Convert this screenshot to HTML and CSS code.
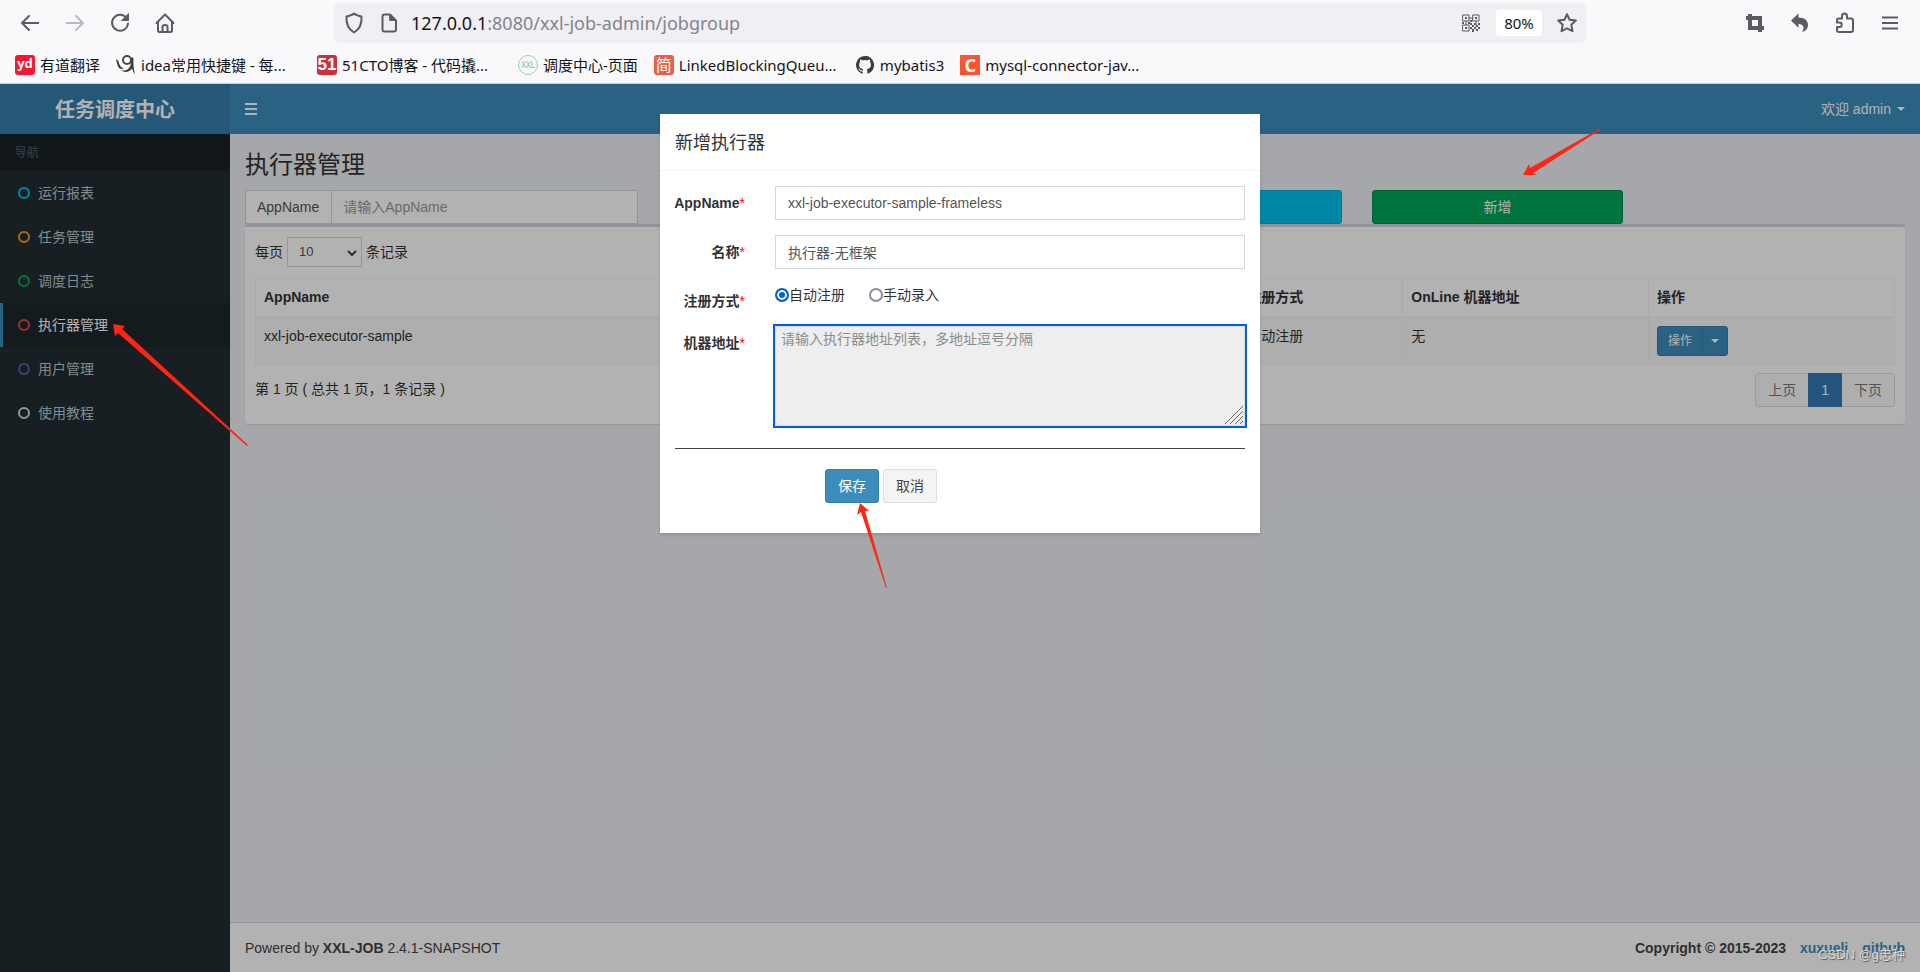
FILE: index.html
```html
<!DOCTYPE html>
<html lang="zh-CN">
<head>
<meta charset="utf-8">
<title>任务调度中心</title>
<link rel="stylesheet" href="styles.css">
</head>
<body>
<div class="chrome">
  <div class="toolbar">
    <div class="nav-buttons">
      <button class="tool" aria-label="后退"><svg width="18" height="18" viewBox="0 0 18 18"><path d="M17.5 9H1.5M8 2 1 9l7 7"/></svg></button>
      <button class="tool faded" aria-label="前进"><svg width="18" height="18" viewBox="0 0 18 18"><path d="M.5 9h16M10 2l7 7-7 7"/></svg></button>
      <button class="tool" aria-label="刷新"><svg width="20" height="20" viewBox="0 0 20 20"><path d="M16.6 5.2A8 8 0 1 0 18 10.5"/><path class="solid" d="M18.5 1v6.5H12z"/></svg></button>
      <button class="tool" aria-label="主页"><svg width="20" height="20" viewBox="0 0 20 20"><path d="M1.500 10 10 1.500l8.500 8.500M3 9v8.500q0 1.500 1.500 1.500h11q1.500 0 1.500-1.500V9M7.500 19v-5.500q0-1.500 2.500-1.500t2.500 1.500V19"/></svg></button>
    </div>
    <div class="urlbar">
      <svg class="url-icon" width="20" height="22" viewBox="0 0 20 22"><path d="M10 1.500c2 2 5 2.500 7.500 3 .500 7-1.500 12.500-7.500 16-6-3.500-8-9-7.500-16 2.500-.500 5.500-1 7.500-3z"/></svg>
      <svg class="url-icon" width="18" height="20" viewBox="0 0 18 20"><path d="M4.500 1.500H10l6 6v9q0 2-2 2H4.500q-2 0-2-2v-13q0-2 2-2z"/><path class="solid" d="M10 1.500l6 6h-6z"/></svg>
      <span class="url"><b>127.0.0.1</b>:8080/xxl-job-admin/jobgroup</span>
      <svg class="qr" width="18" height="18" viewBox="0 0 18 18"><path d="M1 1h6v6H1zM11 1h6v6h-6zM1 11h6v6H1zM7 4h4M4 7v4M14 7v4"/><path class="fill" d="M3 3h2v2H3zM13 3h2v2h-2zM3 13h2v2H3zM8 6h2v2H8zM8 9h2v2H8zM10 11h2v2h-2zM12 9h2v2h-2zM14 11h2v2h-2zM16 9h2v2h-2zM12 13h2v2h-2zM16 13h2v2h-2zM14 15h2v2h-2zM10 15h2v3h-2zM8 13h2v2H8zM6 8h2v2H6zM0 8h2v2H0z"/></svg>
      <button class="zoom-level">80%</button>
      <svg class="star" width="20" height="20" viewBox="0 0 20 20"><path d="M10 1.200l2.600 5.500 6.200.8-4.500 4.200 1.200 6.500L10 15.300l-5.500 2.900 1.200-6.500L1.200 7.500l6.200-.8z"/></svg>
    </div>
    <div class="ext-buttons">
      <button class="tool" aria-label="截图"><svg width="20" height="20" viewBox="0 0 20 20"><path class="thick" d="M1 5h14v14M5 1v14h14"/></svg></button>
      <button class="tool" aria-label="撤销"><svg width="20" height="20" viewBox="0 0 20 20"><path class="fill" d="M1 7.500 8.500.5v4c6 0 9.500 3 9.500 7.500 0 3-2 6-6 7 2.500-3 2.500-7.500-3.500-8.200v4z"/></svg></button>
      <button class="tool" aria-label="扩展"><svg width="20" height="22" viewBox="0 0 20 22"><path d="M7 6.500V4a2.500 2.500 0 0 1 5 0v2.500h4q2 0 2 2V18q0 2-2 2H4q-2 0-2-2v-3h2.500a2.200 2.200 0 0 0 0-4.500H2v-2q0-2 2-2z"/></svg></button>
      <button class="tool" aria-label="菜单"><svg width="16" height="14" viewBox="0 0 16 14"><path class="thin" d="M0 1.500h16M0 7h16M0 12.500h16"/></svg></button>
    </div>
  </div>
  <div class="bookmarks">
    <a class="bookmark" href="#"><span class="favicon yd">yd</span>有道翻译</a>
    <a class="bookmark long" href="#"><svg class="favicon" viewBox="0 0 20 20"><path d="M0 4.500c1 0 2 .5 2.500 2C3.500 10.500 5 13 8 13.500c-2 .8-3.500.5-5-.5C1.500 11 1 8 0 4.500zM5 15c4 1.500 8-.5 9.500-4.500L15.500 2l2 1c-.3 5 0 10 1.500 16.500-1.500-2-2.500-4-3-6-2.500 4-8 4.500-11 1.500z"/><circle cx="11" cy="5" r="4" fill="none" stroke="#4b4844" stroke-width="2"/></svg>idea常用快捷键 - 每...</a>
    <a class="bookmark long" href="#"><span class="favicon cto">51</span>51CTO博客 - 代码撬...</a>
    <a class="bookmark" href="#"><span class="favicon xxl">XXL</span>调度中心-页面</a>
    <a class="bookmark long" href="#"><span class="favicon jian">简</span>LinkedBlockingQueu...</a>
    <a class="bookmark" href="#"><svg class="favicon" viewBox="0 0 16 16"><path d="M8 .7a7.300 7.300 0 0 0-2.300 14.200c.4 0 .5-.2.5-.4v-1.300c-2 .4-2.500-.9-2.500-.9-.3-.8-.8-1-.8-1-.7-.5 0-.5 0-.5.7.1 1.100.8 1.100.8.7 1.100 1.700.8 2.200.6 0-.5.300-.8.5-1-1.700-.2-3.400-.8-3.400-3.600 0-.8.3-1.500.8-2-.1-.2-.4-1 .1-2 0 0 .6-.2 2 .7a7 7 0 0 1 3.700 0c1.400-.9 2-.7 2-.7.4 1 .1 1.800.1 2 .5.500.7 1.200.7 2 0 2.800-1.700 3.400-3.300 3.600.3.200.5.700.5 1.300v2c0 .2.100.4.500.4A7.300 7.300 0 0 0 8 .7z"/></svg>mybatis3</a>
    <a class="bookmark" href="#"><span class="favicon csdn">C</span>mysql-connector-jav...</a>
  </div>
</div>

<div class="app">
  <aside class="sidebar">
    <a class="logo" href="#">任务调度中心</a>
    <nav>
      <div class="nav-header">导航</div>
      <a class="nav-item" href="#"><i class="ring aqua"></i>运行报表</a>
      <a class="nav-item" href="#"><i class="ring yellow"></i>任务管理</a>
      <a class="nav-item" href="#"><i class="ring green"></i>调度日志</a>
      <a class="nav-item active" href="#"><i class="ring red"></i>执行器管理</a>
      <a class="nav-item" href="#"><i class="ring purple"></i>用户管理</a>
      <a class="nav-item" href="#"><i class="ring gray"></i>使用教程</a>
    </nav>
  </aside>
  <div class="main">
    <header class="navbar">
      <button class="toggle" aria-label="切换导航"><span></span><span></span><span></span></button>
      <button class="welcome">欢迎 admin <i class="caret"></i></button>
    </header>
    <main class="content">
      <h1>执行器管理</h1>
      <div class="filters">
        <div class="input-group">
          <label for="q-app">AppName</label>
          <input id="q-app" type="text" placeholder="请输入AppName">
        </div>
        <button class="btn btn-search" aria-label="搜索"></button>
        <button class="btn btn-add">新增</button>
      </div>
      <section class="box">
        <div class="length">
          <label for="len">每页</label>
          <span class="select-wrap">
            <select id="len"><option>10</option></select>
            <svg width="10" height="6" viewBox="0 0 10 6"><path d="M1 1l4 4 4-4"/></svg>
          </span>
          <span>条记录</span>
        </div>
        <table>
          <colgroup><col class="w30"><col class="w30"><col class="w10"><col class="w15"><col class="w15"></colgroup>
          <thead><tr><th>AppName</th><th>名称</th><th>注册方式</th><th>OnLine 机器地址</th><th>操作</th></tr></thead>
          <tbody><tr><td>xxl-job-executor-sample</td><td></td><td>自动注册</td><td>无</td>
            <td><div class="btn-group"><button class="act">操作</button><button class="act drop" aria-label="展开"><i class="caret"></i></button></div></td></tr></tbody>
        </table>
        <div class="table-foot">
          <div>第 1 页 ( 总共 1 页，1 条记录 )</div>
          <div class="pager"><a href="#">上页</a><a class="current" href="#">1</a><a href="#">下页</a></div>
        </div>
      </section>
    </main>
    <footer class="footer">
      <div>Powered by <b>XXL-JOB</b> 2.4.1-SNAPSHOT</div>
      <div class="copyright">Copyright © 2015-2023 <a href="#">xuxueli</a><a href="#">github</a></div>
    </footer>
  </div>

  <div class="backdrop">
    <div class="modal" role="dialog" aria-labelledby="dlg-title">
      <h2 id="dlg-title">新增执行器</h2>
      <form class="form">
        <div class="row">
          <label for="f-app">AppName<em>*</em></label>
          <input id="f-app" type="text" value="xxl-job-executor-sample-frameless">
        </div>
        <div class="row">
          <label for="f-title">名称<em>*</em></label>
          <input id="f-title" type="text" value="执行器-无框架">
        </div>
        <div class="row">
          <span class="row-label">注册方式<em>*</em></span>
          <div class="radios">
            <label><input type="radio" name="type" checked>自动注册</label>
            <label><input type="radio" name="type">手动录入</label>
          </div>
        </div>
        <div class="row">
          <label for="f-addr">机器地址<em>*</em></label>
          <div class="area">
            <textarea id="f-addr" placeholder="请输入执行器地址列表，多地址逗号分隔"></textarea>
            <svg class="grip" width="18" height="18" viewBox="0 0 18 18"><path d="M0 18 18 0M5 18 18 5M10 18l8-8M15 18l3-3"/></svg>
          </div>
        </div>
        <hr>
        <div class="actions">
          <button type="button" class="btn btn-save">保存</button>
          <button type="button" class="btn btn-cancel">取消</button>
        </div>
      </form>
    </div>
  </div>
</div>

<svg class="arrows" width="1920" height="972" viewBox="0 0 1920 972">
  <path d="M113 324l12 2-3 3L248 445l-1 1L118 333l-3 3z"/>
  <path d="M1523 175l6-11 1 4 69-39 1 1-67 43 4 2z"/>
  <path d="M860 503l9 8-4 0 22 77-1 0L861 512l-4 3z"/>
</svg>
<div class="watermark">CSDN @g忠种</div>
</body>
</html>
```
FILE: styles.css
```css
* { box-sizing: border-box; }
body {
  margin: 0;
  min-height: 100vh;
  display: flex;
  flex-direction: column;
  position: relative;
  font: 14px/20px "Liberation Sans", "Noto Sans CJK SC", sans-serif;
  color: #333;
}
button, input, select, textarea { font: inherit; color: inherit; margin: 0; }
button { cursor: pointer; }
a { text-decoration: none; color: inherit; }

/* browser chrome */
.chrome {
  height: 84px;
  background: #f9f9fb;
  border-bottom: 1px solid #ccc;
  font-family: "Noto Sans", "Noto Sans CJK SC", sans-serif;
  color: #15141a;
}
.toolbar { display: flex; height: 46px; align-items: center; padding: 0 8px 0 7px; }
.nav-buttons, .ext-buttons { display: flex; }
.nav-buttons { flex: 0 0 327px; }
.ext-buttons { flex: 0 0 180px; margin-left: auto; }
.tool {
  width: 45px;
  height: 40px;
  border: 0;
  padding: 0;
  background: none;
  display: flex;
  align-items: center;
  justify-content: center;
}
.chrome svg path { fill: none; stroke: #5b5b66; stroke-width: 2; stroke-linejoin: round; stroke-linecap: round; }
.chrome svg .solid { fill: #5b5b66; stroke-width: 1; }
.chrome svg .fill { fill: #5b5b66; stroke: none; }
.chrome svg .thick { stroke-width: 4; stroke-linecap: butt; stroke-linejoin: miter; }
.chrome svg .thin { stroke-linecap: butt; }
.faded { opacity: .4; }
.urlbar {
  flex: 0 1 1252px;
  height: 40px;
  background: #f0f0f4;
  border-radius: 5px;
  display: flex;
  align-items: center;
  padding: 0 9px 0 10px;
}
.url-icon { margin-right: 16px; }
.url-icon + .url-icon { margin-right: 13px; }
.url { flex: 1; font-size: 18px; color: #84848c; }
.url b { font-weight: 400; color: #15141a; }
.zoom-level {
  width: 46px;
  height: 26px;
  border: 0;
  border-radius: 4px;
  background: #fff;
  padding: 0;
  margin: 0 15px 0 16px;
  font-size: 15px;
}
.chrome .qr path { stroke-width: 1; stroke-linejoin: miter; }
.bookmarks { display: flex; gap: 16px; padding: 9px 15px; height: 37px; font-size: 15px; }
.bookmark { display: flex; align-items: center; gap: 5px; white-space: nowrap; }
.bookmark.long { width: 185px; }
.favicon { width: 20px; height: 20px; flex: none; text-align: center; line-height: 20px; border-radius: 3px; color: #fff; }
.chrome svg.favicon path { fill: #3f3d3a; stroke: none; }
.yd { background: #fb1535; font-size: 13px; font-weight: 700; line-height: 17px; }
.cto { background: #cc2f3e; font-family: "Liberation Sans", sans-serif; font-size: 17px; font-weight: 700; }
.xxl { border: 1px solid #8fd3b6; border-radius: 50%; color: #77bd9d; font-size: 8px; line-height: 18px; }
.jian { background: #e8604a; font-size: 16px; }
.csdn { background: #fc5531; border-radius: 0; font-size: 18px; font-weight: 700; }

/* application shell */
.app { flex: 1; display: flex; position: relative; background: #ecf0f5; }
.sidebar { flex: 0 0 230px; background: #222d32; }
.logo {
  display: block;
  height: 50px;
  line-height: 52px;
  background: #367fa9;
  color: #fff;
  text-align: center;
  font-size: 20px;
  font-weight: 700;
}
.nav-header { padding: 10px 15px; height: 37px; line-height: 18px; font-size: 12px; color: #4b646f; background: #1a2226; }
.nav-item {
  display: flex;
  align-items: center;
  gap: 8px;
  height: 44px;
  padding-left: 15px;
  border-left: 3px solid transparent;
  color: #b8c7ce;
}
.nav-item.active { background: #1e282c; border-color: #3c8dbc; color: #fff; }
.ring { width: 12px; height: 12px; border: 2px solid; border-radius: 50%; }
.aqua { color: #00c0ef; }
.yellow { color: #f39c12; }
.green { color: #00a65a; }
.red { color: #dd4b39; }
.purple { color: #605ca8; }
.gray { color: #d2d6de; }

.main { flex: 1; min-width: 0; display: flex; flex-direction: column; }
.navbar { height: 50px; background: #3c8dbc; display: flex; justify-content: space-between; align-items: center; padding: 0 15px; }
.toggle { border: 0; background: none; padding: 0; display: grid; gap: 3px; }
.toggle span { width: 12px; height: 2px; background: #fff; }
.welcome { border: 0; background: none; color: #fff; padding: 0; display: flex; align-items: center; gap: 6px; }
.caret { display: inline-block; vertical-align: middle; width: 0; height: 0; border: 4px solid transparent; border-top-color: currentColor; border-bottom: 0; }

.content { flex: 1; padding: 15px; }
h1 { margin: 0 0 9px; font-size: 24px; line-height: 32px; font-weight: 400; }
.filters { display: grid; grid-template-columns: repeat(12, 1fr); column-gap: 30px; }
.filters .input-group { grid-column: 1 / span 3; }
.filters .btn-search { grid-column: 7 / span 2; }
.filters .btn-add { grid-column: 9 / span 2; }
.input-group { display: flex; height: 34px; border: 1px solid #d2d6de; background: #fff; color: #555; }
.input-group label { flex: 0 0 86px; padding: 6px 12px 6px 11px; border-right: 1px solid #d2d6de; }
.input-group input { flex: 1; min-width: 0; border: 0; padding: 0 11px; background: none; }
::placeholder { color: #999; opacity: 1; }
.btn { height: 34px; padding: 0 12px; border: 1px solid; border-radius: 3px; color: #fff; }
.btn-search { background: #00c0ef; border-color: #00acd6; }
.btn-add { background: #00a65a; border-color: #008d4c; }

.box { background: #fff; border-top: 3px solid #d2d6de; border-radius: 3px; box-shadow: 0 1px 1px rgba(0, 0, 0, .1); padding: 10px; }
.length { display: flex; align-items: center; gap: 4px; margin-bottom: 11px; }
.select-wrap { position: relative; display: flex; }
.select-wrap select { appearance: none; width: 75px; height: 30px; padding: 0 11px; border: 1px solid #d2d6de; border-radius: 0; background: #fff; color: #555; font-size: 13px; }
.select-wrap svg { position: absolute; right: 5px; top: 13px; fill: none; stroke: #444; stroke-width: 2; pointer-events: none; }
table { width: 100%; table-layout: fixed; border-collapse: collapse; border: 1px solid #f4f4f4; }
.w30 { width: 30%; }
.w10 { width: 10%; }
.w15 { width: 15%; }
th, td { text-align: left; vertical-align: top; padding: 8px; border: 1px solid #f4f4f4; }
th { border-bottom: 2px solid #f4f4f4; height: 38px; }
td { background: #f9f9f9; height: 48px; }
.btn-group { display: flex; }
.act { height: 30px; padding: 0 10px; font-size: 12px; color: #fff; background: #3c8dbc; border: 1px solid #367fa9; border-radius: 3px 0 0 3px; }
.act.drop { margin-left: -1px; padding: 0 8px; border-radius: 0 3px 3px 0; }
.table-foot { display: flex; justify-content: space-between; padding: 8px 0 7px; }
.table-foot > div:first-child { padding-top: 6px; }
.pager { display: flex; border: 1px solid #ddd; border-radius: 4px; background: #fafafa; color: #777; }
.pager a { height: 32px; line-height: 32px; padding: 0 12px; }
.pager .current { margin: -1px 0; height: 34px; line-height: 34px; padding: 0 13px; background: #337ab7; color: #fff; }
.footer { display: flex; justify-content: space-between; padding: 15px 15px 14px; border-top: 1px solid #d2d6de; background: #fff; color: #444; }
.copyright { font-weight: 700; }
.copyright a { color: #3c8dbc; margin-left: 10px; }
.copyright a + a { margin-left: 14px; }

/* dialog */
.backdrop { position: absolute; inset: 0; background: rgba(0, 0, 0, .3); padding: 30px 0; }
.modal { width: 600px; max-width: 100%; margin: 0 auto; background: #fff; box-shadow: 0 2px 3px rgba(0, 0, 0, .125); }
.modal h2 { margin: 0; padding: 16px 15px 14px; line-height: 26px; font-size: 18px; font-weight: 400; border-bottom: 1px solid #f4f4f4; }
.form { padding: 15px 15px 30px; }
.row { display: grid; grid-template-columns: 70px 1fr; column-gap: 30px; margin-bottom: 15px; align-items: start; }
.row > label, .row-label { padding-top: 7px; font-weight: 700; text-align: right; white-space: nowrap; justify-self: end; }
em { color: #f00; font-style: normal; font-weight: 400; }
.row > input { width: 100%; height: 34px; padding: 0 12px; border: 1px solid #d2d6de; color: #555; background: #fff; }
.radios { display: flex; gap: 24px; padding-top: 1px; }
.radios label { display: flex; align-items: center; }
.radios input {
  appearance: none;
  width: 14px;
  height: 14px;
  border: 2px solid #8f8f9d;
  border-radius: 50%;
  background: #fff;
}
.radios input:checked { border-color: #0061e0; background: #0061e0; box-shadow: inset 0 0 0 2px #fff; }
.area { position: relative; display: flex; }
textarea {
  width: 100%;
  height: 100px;
  resize: none;
  padding: 2px 5px;
  border: 1px solid #ddd;
  border-radius: 0;
  background: #eee;
  outline: 2px solid #0061e0;
}
textarea::placeholder { color: #8c8c8c; }
.grip { position: absolute; right: 2px; bottom: 2px; stroke: #666; stroke-width: 1; }
hr { margin: 22px 0 20px; border: 0; border-top: 1px solid #444; }
.actions { display: flex; gap: 4px; padding-left: 150px; }
.actions .btn { width: 54px; }
.btn-save { background: #3c8dbc; border-color: #367fa9; }
.btn-cancel { background: #f4f4f4; border-color: #ddd; color: #444; }

/* annotations */
.arrows { position: absolute; left: 0; top: 0; fill: #ff2413; pointer-events: none; }
.watermark { position: absolute; right: 15px; bottom: 7px; color: #d8d8d8; text-shadow: 1px 1px 1px #555; font-size: 13px; line-height: 20px; pointer-events: none; }
```
